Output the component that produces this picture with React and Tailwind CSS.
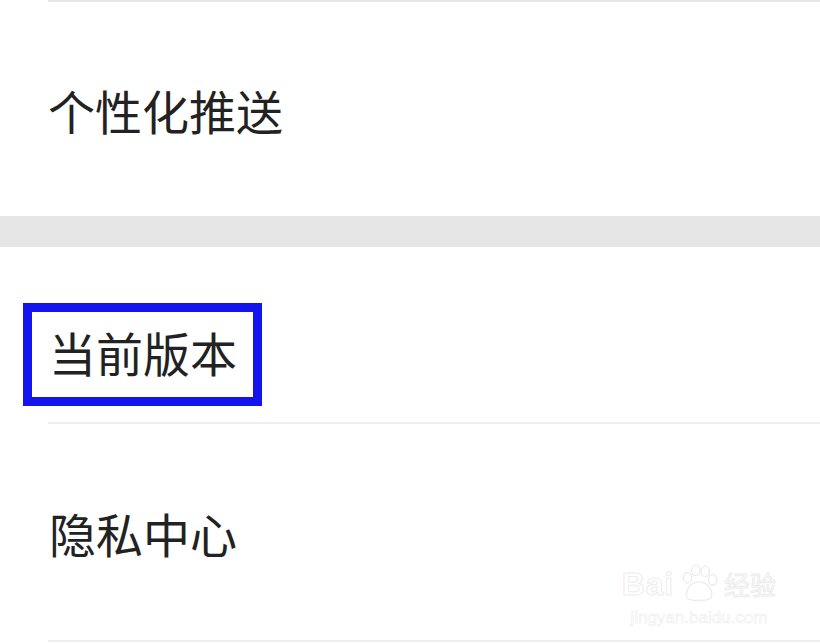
import React from 'react';

const font = { fontFamily: '"Noto Sans CJK SC", "Noto Sans", sans-serif' };

const Watermark = () => (
  <div className="absolute right-[44px] bottom-[18px] flex flex-col items-center pointer-events-none select-none" style={font}>
    <div className="flex items-center gap-1">
      <span className="text-[32px] leading-none font-bold tracking-wide" style={{ fontFamily: '"Liberation Sans", sans-serif', WebkitTextStroke: '1px #ededed', color: 'transparent' }}>Bai</span>
      <svg width="42" height="42" viewBox="0 0 40 40" fill="none" stroke="#ececec" strokeWidth="1.3">
        <ellipse cx="9" cy="14" rx="4" ry="5" />
        <ellipse cx="17" cy="7" rx="4" ry="5" />
        <ellipse cx="26" cy="8" rx="4" ry="5" />
        <ellipse cx="33" cy="16" rx="4" ry="5" />
        <path d="M8 32 C8 22 14 18 20 18 C27 18 33 24 32 32 C31 37 9 37 8 32 Z" />
      </svg>
      <span className="text-[26px] leading-none" style={{ WebkitTextStroke: '1px #ececec', color: 'transparent' }}>经验</span>
    </div>
    <span className="text-[17px] leading-none mt-1" style={{ fontFamily: '"Liberation Sans", sans-serif', WebkitTextStroke: '0.6px #eeeeee', color: 'transparent' }}>jingyan.baidu.com</span>
  </div>
);

export default function App() {
  return (
    <div className="relative w-[820px] h-[644px] bg-white overflow-hidden text-[#222]" style={font}>
      <div className="ml-[48px] h-[2px] bg-[#e6e6e6]" />
      <div className="h-[214px] flex items-center pl-[48px]">
        <span className="text-[47px] leading-none">个性化推送</span>
      </div>
      <div className="h-[31px] bg-[#e6e6e6]" />
      <div className="h-[175px] pt-[56px] pl-[23px]">
        <div className="w-[239px] h-[103px] border-[9px] border-[#1414ee] flex items-center pl-[17px] pb-[7px]">
          <span className="text-[47px] leading-none">当前版本</span>
        </div>
      </div>
      <div className="ml-[48px] h-[2px] bg-[#eeeeee]" />
      <div className="h-[216px] flex items-center pl-[49px]">
        <span className="text-[47px] leading-none">隐私中心</span>
      </div>
      <div className="ml-[48px] h-[2px] bg-[#eeeeee]" />
      <Watermark />
    </div>
  );
}
